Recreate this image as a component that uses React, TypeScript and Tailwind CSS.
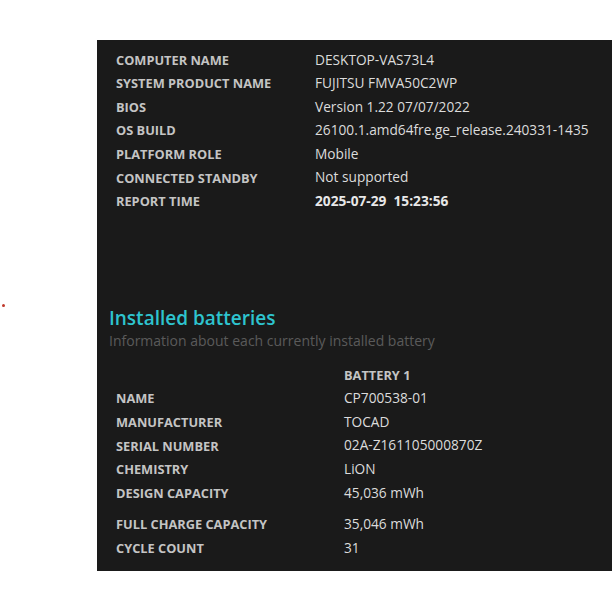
const systemInfo = [
  ["COMPUTER NAME", "DESKTOP-VAS73L4"],
  ["SYSTEM PRODUCT NAME", "FUJITSU FMVA50C2WP"],
  ["BIOS", "Version 1.22 07/07/2022"],
  ["OS BUILD", "26100.1.amd64fre.ge_release.240331-1435"],
  ["PLATFORM ROLE", "Mobile"],
  ["CONNECTED STANDBY", "Not supported"],
];

const batteryInfo = [
  ["NAME", "CP700538-01"],
  ["MANUFACTURER", "TOCAD"],
  ["SERIAL NUMBER", "02A-Z161105000870Z"],
  ["CHEMISTRY", "LiON"],
  ["DESIGN CAPACITY", "45,036 mWh"],
];

function Row({ label, value, labelW, bold }: { label: string; value: string; labelW: string; bold?: boolean }) {
  return (
    <div className="flex h-[23.6px] items-center">
      <div className={`${labelW} shrink-0 pt-[1px] text-[12.8px] font-bold text-[#c4c4c4]`}>{label}</div>
      <div className={`text-[13.7px] whitespace-pre ${bold ? "font-bold text-[#e8e8e8]" : "text-[#dcdcdc]"}`}>{value}</div>
    </div>
  );
}

export default function App() {
  return (
    <div className="relative h-[612px] w-[612px] bg-white font-['Open_Sans',sans-serif]">
      <div className="absolute left-[2px] top-[304px] h-[3px] w-[3px] rounded-full bg-[#c0392b]" />
      <div className="ml-[97px] pt-[40px]">
        <div className="h-[531px] w-[515px] bg-[#1a1a1a] pt-[8px]">
          <div className="pl-[19px]">
            {systemInfo.map(([l, v]) => (
              <Row key={l} label={l} value={v} labelW="w-[199px]" />
            ))}
            <Row label="REPORT TIME" value="2025-07-29  15:23:56" labelW="w-[199px]" bold />
          </div>

          <div className="mt-[93px] pl-[12px]">
            <h2 className="text-[19px] leading-[24px] font-semibold text-[#2ec4cf]">Installed batteries</h2>
            <p className="mt-[1px] text-[14px] leading-[20px] text-[#5a5a5a]">Information about each currently installed battery</p>
          </div>

          <div className="mt-[12px] pl-[19px]">
            <div className="flex h-[23.6px] items-center">
              <div className="w-[228px] shrink-0" />
              <div className="pt-[1px] text-[12.8px] font-bold text-[#c4c4c4]">BATTERY 1</div>
            </div>
            {batteryInfo.map(([l, v]) => (
              <Row key={l} label={l} value={v} labelW="w-[228px]" />
            ))}
            <div className="h-[8px]" />
            <Row label="FULL CHARGE CAPACITY" value="35,046 mWh" labelW="w-[228px]" />
            <Row label="CYCLE COUNT" value="31" labelW="w-[228px]" />
          </div>
        </div>
      </div>
    </div>
  );
}
